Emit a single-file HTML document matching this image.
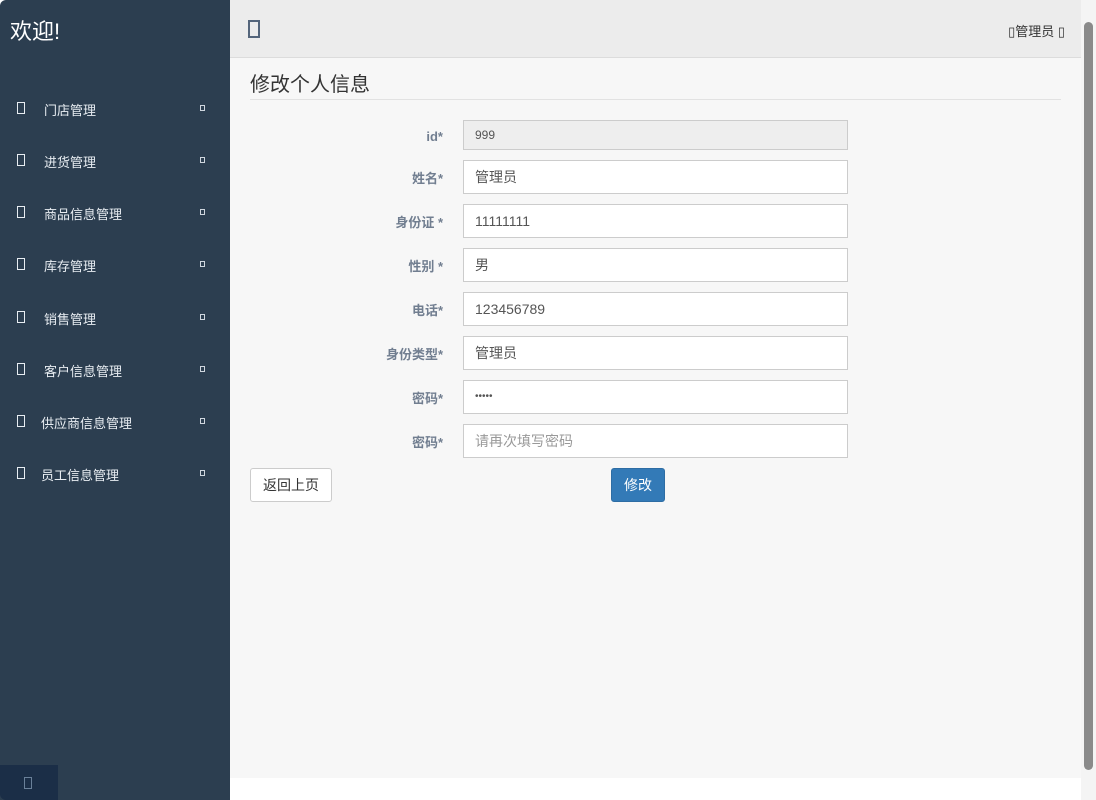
<!DOCTYPE html>
<html><head><meta charset="utf-8"><style>
*{box-sizing:border-box;margin:0;padding:0}
body{width:1096px;height:800px;overflow:hidden;background:#fff;font-family:"Liberation Sans","Noto Sans CJK SC",sans-serif;font-size:13px;position:relative}
.side{position:absolute;left:0;top:0;width:230px;height:800px;background:#2c3e50;border-top-left-radius:6px}
.side h1{position:absolute;left:10px;top:14px;font-size:22px;font-weight:normal;color:#fff}
.item{position:absolute;left:0;width:230px;height:20px;color:#e8edf2;font-size:13px}
.item .ic{position:absolute;left:17px;top:2px;width:8px;height:12px;border:1.5px solid #e8edf2}
.item .t{position:absolute;left:44px;top:0px}
.item .s{position:absolute;left:200px;top:5px;width:5px;height:6px;border:1px solid #cfd6de}
.foot{position:absolute;left:0;top:765px;width:58px;height:35px;background:#1b2e47;border-bottom-left-radius:6px}
.foot i{position:absolute;left:24px;top:12px;width:8px;height:12px;border:1.5px solid #6a8099}
.hdr{position:absolute;left:230px;top:0;width:851px;height:58px;background:#ececec;border-bottom:1px solid #dcdcdc}
.hdr .b{position:absolute;left:18px;top:20px;width:12px;height:18px;border:2px solid #54657b}
.hdr .u{position:absolute;right:16px;top:21px;font-size:13px;color:#333}
.main{position:absolute;left:230px;top:58px;width:851px;height:720px;background:#f7f7f7}
.main h2{position:absolute;left:20px;top:10px;font-size:20px;font-weight:normal;color:#333}
.hr{position:absolute;left:20px;top:41px;width:811px;height:1px;background:#e2e2e2}
.lab{position:absolute;width:213px;text-align:right;font-weight:bold;color:#717e90;font-size:13px}
.inp{position:absolute;left:233px;width:385px;height:34px;background:#fff;border:1px solid #ccc;padding-left:11px;line-height:32px;font-size:14px;color:#555}
.btn{position:absolute;height:34px;border-radius:3px;font-size:14px;line-height:32px;text-align:center}
.sb{position:absolute;left:1081px;top:0;width:15px;height:800px;background:#f4f4f4}
.thumb{position:absolute;left:3px;top:22px;width:9px;height:748px;background:#8a8a8a;border-radius:5px}
</style></head><body>
<div class="side"><h1>欢迎!</h1>
<div class="item" style="top:100px"><i class="ic"></i><span class="t">门店管理</span><i class="s"></i></div>
<div class="item" style="top:152px"><i class="ic"></i><span class="t">进货管理</span><i class="s"></i></div>
<div class="item" style="top:204px"><i class="ic"></i><span class="t">商品信息管理</span><i class="s"></i></div>
<div class="item" style="top:256px"><i class="ic"></i><span class="t">库存管理</span><i class="s"></i></div>
<div class="item" style="top:309px"><i class="ic"></i><span class="t">销售管理</span><i class="s"></i></div>
<div class="item" style="top:361px"><i class="ic"></i><span class="t">客户信息管理</span><i class="s"></i></div>
<div class="item" style="top:413px"><i class="ic"></i><span class="t" style="left:41px">供应商信息管理</span><i class="s"></i></div>
<div class="item" style="top:465px"><i class="ic"></i><span class="t" style="left:41px">员工信息管理</span><i class="s"></i></div>
<div class="foot"><i></i></div>
</div>
<div class="hdr"><i class="b"></i><span class="u">▯管理员 ▯</span></div>
<div class="main">
<h2>修改个人信息</h2><div class="hr"></div>
<div class="lab" style="top:71px">id*</div><div class="inp" style="top:62px;height:30px;line-height:28px;background:#eee;font-size:12px">999</div>
<div class="lab" style="top:110px">姓名*</div><div class="inp" style="top:102px">管理员</div>
<div class="lab" style="top:154px">身份证 *</div><div class="inp" style="top:146px">11111111</div>
<div class="lab" style="top:198px">性别 *</div><div class="inp" style="top:190px">男</div>
<div class="lab" style="top:242px">电话*</div><div class="inp" style="top:234px">123456789</div>
<div class="lab" style="top:286px">身份类型*</div><div class="inp" style="top:278px">管理员</div>
<div class="lab" style="top:330px">密码*</div><div class="inp" style="top:322px;font-size:10px">•••••</div>
<div class="lab" style="top:374px">密码*</div><div class="inp" style="top:366px;color:#999">请再次填写密码</div>
<div class="btn" style="left:20px;top:410px;width:82px;background:#fff;border:1px solid #ccc;color:#333">返回上页</div>
<div class="btn" style="left:381px;top:410px;width:54px;background:#337ab7;border:1px solid #2e6da4;color:#fff">修改</div>
</div>
<div class="sb"><div class="thumb"></div></div>
</body></html>
